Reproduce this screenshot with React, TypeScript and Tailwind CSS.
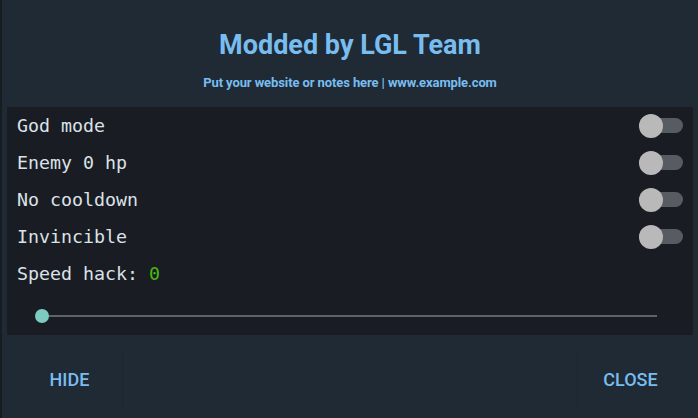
const toggles = ["God mode", "Enemy 0 hp", "No cooldown", "Invincible"];

function Switch() {
  return (
    <div className="relative flex h-[24px] w-[44px] items-center">
      <div className="h-[15px] w-[44px] rounded-full bg-[#565c62]" />
      <div className="absolute left-0 top-0 h-[24px] w-[24px] rounded-full bg-[#b9b9b9]" />
    </div>
  );
}

export default function App() {
  return (
    <div className="flex h-[418px] w-[698px] bg-[#1f2a34] font-['Roboto',sans-serif]">
      <div className="w-[2px] bg-[#171c21]" />
      <div className="flex flex-1 flex-col">
        <div className="flex flex-col items-center pt-[29px]">
          <h1 className="text-[27px] font-bold leading-[32px] text-[#79bdf0]">Modded by LGL Team</h1>
          <p className="mt-[14px] text-[13px] font-bold leading-[16px] tracking-[-0.1px] text-[#79bdf0]">
            Put your website or notes here | www.example.com
          </p>
        </div>

        <div className="mx-[5px] mt-[16px] flex h-[228px] flex-col bg-[#191d23] font-['DejaVu_Sans_Mono',monospace] text-[18.3px] text-[#dbe2e8]">
          {toggles.map((t) => (
            <div key={t} className="flex h-[37px] items-center justify-between pl-[10px] pr-[10px]">
              <span>{t}</span>
              <Switch />
            </div>
          ))}
          <div className="flex h-[37px] items-center pl-[10px]">
            <span>
              Speed hack: <span className="text-[#48b814]">0</span>
            </span>
          </div>
          <div className="relative mt-[17px] flex h-[14px] items-center pl-[35px] pr-[36px]">
            <div className="h-[2px] flex-1 bg-[#5e6368]" />
            <div className="absolute left-[28px] top-0 h-[14px] w-[14px] rounded-full bg-[#7ecbc1]" />
          </div>
        </div>

        <div className="flex justify-between px-[15px] pt-[17px]">
          <button className="h-[55px] w-[106px] border-r border-[#1c2630] text-[18px] font-medium text-[#79bdf0]">
            HIDE
          </button>
          <button className="h-[55px] w-[106px] border-l border-[#1c2630] text-[18px] font-medium text-[#79bdf0]">
            CLOSE
          </button>
        </div>
      </div>
    </div>
  );
}
